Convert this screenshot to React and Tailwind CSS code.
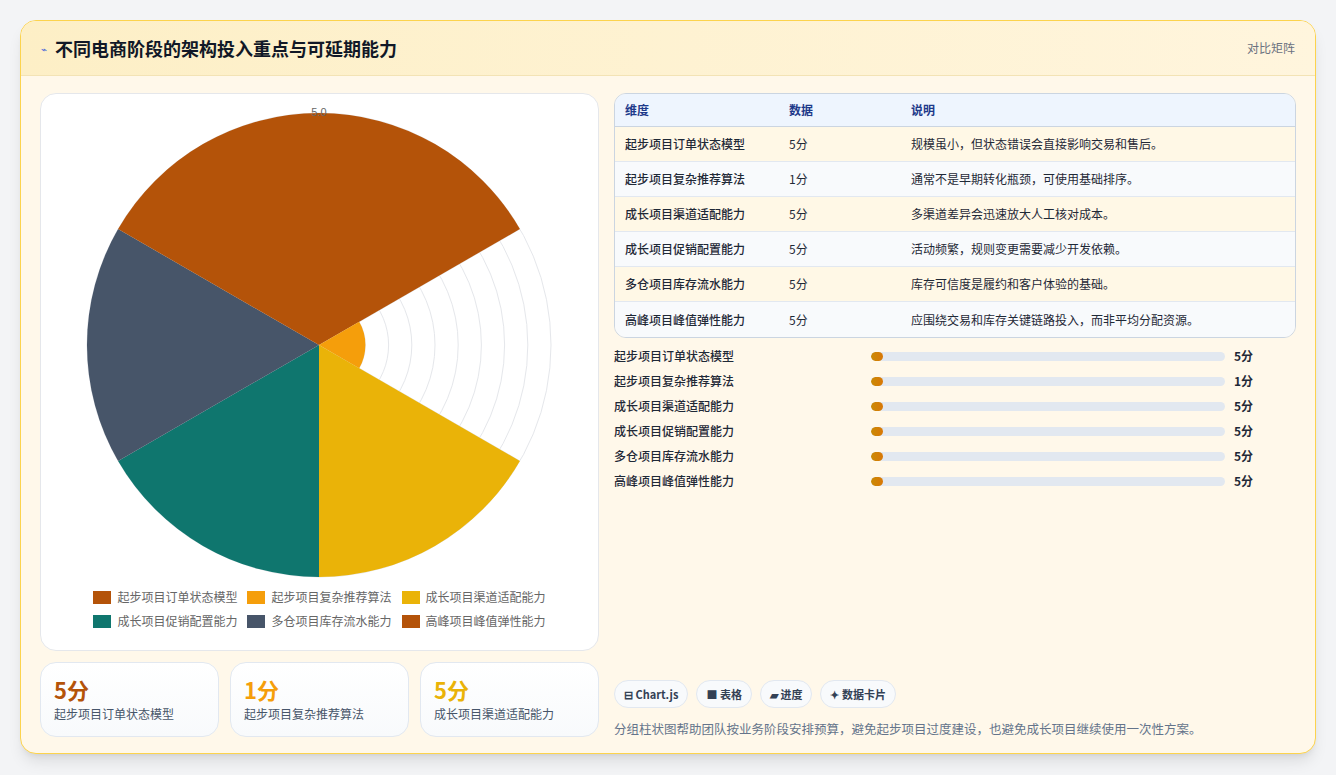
import React from "react";

const rows = [
  ["起步项目订单状态模型", 5, "规模虽小，但状态错误会直接影响交易和售后。"],
  ["起步项目复杂推荐算法", 1, "通常不是早期转化瓶颈，可使用基础排序。"],
  ["成长项目渠道适配能力", 5, "多渠道差异会迅速放大人工核对成本。"],
  ["成长项目促销配置能力", 5, "活动频繁，规则变更需要减少开发依赖。"],
  ["多仓项目库存流水能力", 5, "库存可信度是履约和客户体验的基础。"],
  ["高峰项目峰值弹性能力", 5, "应围绕交易和库存关键链路投入，而非平均分配资源。"],
];
const colors = ["#b45309", "#f59e0b", "#eab308", "#0f766e", "#475569", "#b45309"];

function sector(cx, cy, r, a0, a1) {
  const rad = (a) => (a * Math.PI) / 180;
  const x0 = cx + r * Math.cos(rad(a0)), y0 = cy + r * Math.sin(rad(a0));
  const x1 = cx + r * Math.cos(rad(a1)), y1 = cy + r * Math.sin(rad(a1));
  return `M${cx},${cy} L${x0},${y0} A${r},${r} 0 0 1 ${x1},${y1} Z`;
}

function Polar() {
  const cx = 278, cy = 251, R = 232;
  const rings = [];
  for (let i = 1; i <= 10; i++) rings.push(i * R / 10);
  return (
    <svg width="558" height="490" viewBox="0 0 558 490">
      {rings.map((r, i) => (
        <circle key={i} cx={cx} cy={cy} r={r} fill="none" stroke="#e5e7eb" strokeWidth="1" />
      ))}
      {[0, 60, 120, 180, 240, 300].map((a) => {
        const t = ((a - 90) * Math.PI) / 180;
        return <line key={a} x1={cx} y1={cy} x2={cx + R * Math.cos(t)} y2={cy + R * Math.sin(t)} stroke="#e5e7eb" />;
      })}
      {rows.map((r, i) => (
        <path key={i} d={sector(cx, cy, (R * r[1]) / 5, -90 + i * 60, -30 + i * 60)} fill={colors[i]} />
      ))}
      <text x={cx} y={22} textAnchor="middle" fontSize="11" fill="#666" fontFamily="Liberation Sans, sans-serif">5.0</text>
    </svg>
  );
}

const font = { fontFamily: '"Noto Sans CJK SC", "Noto Sans", sans-serif' };

export default function App() {
  return (
    <div className="w-[1336px] h-[775px] bg-[#f3f4f6] pt-[20px] px-[20px]" style={font}>
      <div className="w-[1296px] h-[734px] rounded-2xl border border-[#fcd34d] bg-[#fff8ea] overflow-hidden shadow-lg flex flex-col">
        <div className="h-[55px] flex items-center justify-between px-[20px] bg-gradient-to-r from-[#fdefc6] to-[#fff5dd] border-b border-[#f3e3b5]">
          <div className="flex items-center gap-2">
            <span className="text-[#4f6bd8] text-[10px]">⌁</span>
            <span className="text-[18px] font-bold text-[#111827]">不同电商阶段的架构投入重点与可延期能力</span>
          </div>
          <span className="text-[12px] text-[#6b7280]">对比矩阵</span>
        </div>
        <div className="flex gap-[15px] px-[19px] pt-[17px]">
          <div className="w-[559px] flex flex-col gap-[11px]">
            <div className="h-[558px] bg-white rounded-2xl border border-[#e5e7eb] flex flex-col items-center">
              <Polar />
              <div className="grid grid-cols-[auto_auto_auto] gap-x-[10px] gap-y-[6px] mt-[4px] text-[12px] text-[#666]">
                {rows.map((r, i) => (
                  <div key={i} className="flex items-center gap-[6px]">
                    <span className="w-[18px] h-[13px]" style={{ background: colors[i] }} />
                    {r[0]}
                  </div>
                ))}
              </div>
            </div>
            <div className="flex gap-[11px]">
              {[0, 1, 2].map((i) => (
                <div key={i} className="w-[179px] h-[75px] rounded-2xl border border-[#e2e8f0] bg-gradient-to-b from-white to-[#f8fafc] px-[13px] pt-[12px]">
                  <div className="text-[22px] font-bold leading-[28px]" style={{ color: colors[i] }}>{rows[i][1]}分</div>
                  <div className="text-[12px] text-[#475569] mt-[2px]">{rows[i][0]}</div>
                </div>
              ))}
            </div>
          </div>
          <div className="flex-1 flex flex-col">
            <div className="rounded-xl border border-[#cbd5e1] overflow-hidden text-[12px]">
              <div className="flex h-[33px] items-center bg-[#eef5fe] border-b border-[#cbd5e1] text-[#1e3a8a] font-semibold">
                <div className="w-[174px] pl-[10px]">维度</div>
                <div className="w-[122px]">数据</div>
                <div>说明</div>
              </div>
              {rows.map((r, i) => (
                <div key={i} className={`flex h-[35px] items-center text-[#1f2937] ${i < 5 ? "border-b border-[#e2e8f0]" : ""} ${i % 2 ? "bg-[#f8fafc]" : "bg-[#fff8e6]"}`}>
                  <div className="w-[174px] pl-[10px] font-medium">{r[0]}</div>
                  <div className="w-[122px]">{r[1]}分</div>
                  <div>{r[2]}</div>
                </div>
              ))}
            </div>
            <div className="flex flex-col gap-[7px] mt-[9px]">
              {rows.map((r, i) => (
                <div key={i} className="flex items-center h-[18px] text-[12px] text-[#1f2937]">
                  <div className="w-[257px] font-medium">{r[0]}</div>
                  <div className="w-[354px] h-[9px] rounded-full bg-[#e2e8f0] overflow-hidden">
                    <div className="h-full w-[12px] rounded-full bg-gradient-to-r from-[#ca8a04] to-[#d97706]" />
                  </div>
                  <div className="ml-[9px] font-bold">{r[1]}分</div>
                </div>
              ))}
            </div>
            <div className="flex gap-[8px] mt-[190px]">
              {["⊟ Chart.js", "■ 表格", "▰ 进度", "✦ 数据卡片"].map((c) => (
                <div key={c} className="h-[28px] px-[9px] rounded-full border border-[#e2e8f0] bg-[#f8fafc] flex items-center text-[11px] font-bold text-[#334155]">{c}</div>
              ))}
            </div>
            <div className="mt-[12px] text-[12.5px] text-[#64748b]">分组柱状图帮助团队按业务阶段安排预算，避免起步项目过度建设，也避免成长项目继续使用一次性方案。</div>
          </div>
        </div>
      </div>
    </div>
  );
}
